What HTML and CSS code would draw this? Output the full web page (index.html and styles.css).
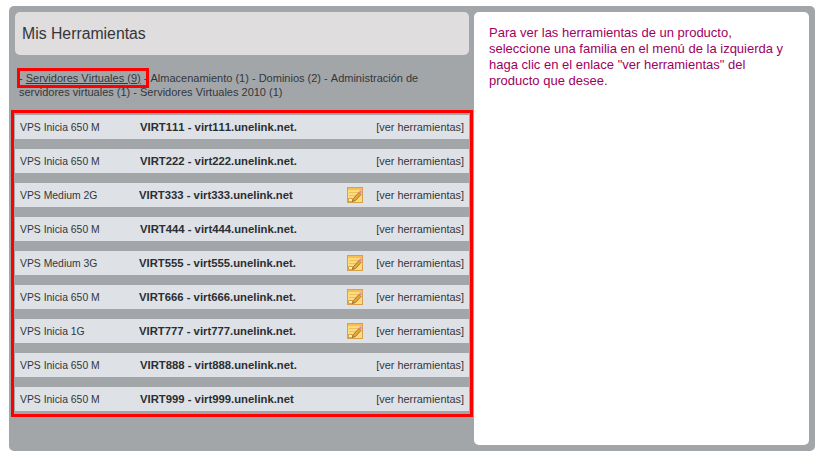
FILE: index.html
```html
<!DOCTYPE html>
<html lang="es">
<head>
<meta charset="utf-8">
<title>Mis Herramientas</title>
<link rel="stylesheet" href="styles.css">
</head>
<body>
<svg width="0" height="0" class="defs">
  <symbol id="note" viewBox="0 0 16 16">
    <rect x="0.5" y="0.5" width="15" height="15" fill="#fcdc7c" stroke="#d8a048"/>
    <rect x="1" y="1" width="14" height="2" fill="#f8c04a"/>
    <path d="M2 5.5h12M2 8.5h7" stroke="#f0c060" fill="none"/>
    <path d="M1.5 11.5h4v3h-4z" fill="#fff0b8" stroke="#d8a048"/>
    <path d="M5.5 14.5l1-3 5.5-6 2 2-5.500 6z" fill="#eda63c" stroke="#6f5a3a" stroke-width=".7"/>
    <path d="M12 4.500l1.500-1.500 2 2-1.500 1.500z" fill="#e88cc4"/>
  </symbol>
</svg>
<main class="panel">
  <section class="left">
    <h1 class="title">Mis Herramientas</h1>
    <p class="families">
      <span class="fam-sel">- <a class="fam-link" href="#">Servidores Virtuales (9)</a> -</span>
      Almacenamiento (1) - Dominios (2) - Administración de servidores virtuales (1) - Servidores Virtuales 2010 (1)
    </p>
    <div class="list">
      <div class="row"><span class="plan">VPS Inicia 650 M</span><b class="name">VIRT111 - virt111.unelink.net.</b><span class="tools">[ver herramientas]</span></div>
      <div class="row"><span class="plan">VPS Inicia 650 M</span><b class="name">VIRT222 - virt222.unelink.net.</b><span class="tools">[ver herramientas]</span></div>
      <div class="row noted"><span class="plan">VPS Medium 2G</span><b class="name">VIRT333 - virt333.unelink.net</b><svg class="icon"><use href="#note"/></svg><span class="tools">[ver herramientas]</span></div>
      <div class="row"><span class="plan">VPS Inicia 650 M</span><b class="name">VIRT444 - virt444.unelink.net.</b><span class="tools">[ver herramientas]</span></div>
      <div class="row noted"><span class="plan">VPS Medium 3G</span><b class="name">VIRT555 - virt555.unelink.net.</b><svg class="icon"><use href="#note"/></svg><span class="tools">[ver herramientas]</span></div>
      <div class="row noted"><span class="plan">VPS Inicia 650 M</span><b class="name">VIRT666 - virt666.unelink.net.</b><svg class="icon"><use href="#note"/></svg><span class="tools">[ver herramientas]</span></div>
      <div class="row noted"><span class="plan">VPS Inicia 1G</span><b class="name">VIRT777 - virt777.unelink.net.</b><svg class="icon"><use href="#note"/></svg><span class="tools">[ver herramientas]</span></div>
      <div class="row"><span class="plan">VPS Inicia 650 M</span><b class="name">VIRT888 - virt888.unelink.net.</b><span class="tools">[ver herramientas]</span></div>
      <div class="row"><span class="plan">VPS Inicia 650 M</span><b class="name">VIRT999 - virt999.unelink.net</b><span class="tools">[ver herramientas]</span></div>
    </div>
  </section>
  <aside class="help">
    <p>Para ver las herramientas de un producto, seleccione una familia en el menú de la izquierda y haga clic en el enlace "ver herramientas" del producto que desee.</p>
  </aside>
</main>
</body>
</html>
```
FILE: styles.css
```css
* { box-sizing: border-box; }
html, body { margin: 0; padding: 0; background: #fff; }
body {
  width: 822px;
  height: 457px;
  padding: 6px 7px 6px 9px;
  font-family: "Liberation Sans", Arial, sans-serif;
  font-kerning: none;
  overflow: hidden;
}
.defs { position: absolute; }
.panel {
  display: flex;
  height: 445px;
  padding: 6px 6px 6px 2px;
  background: #a3a6a9;
  border-radius: 5px;
}
.left { width: 463px; }
.title {
  margin: 0 0 0 4px;
  width: 454px;
  height: 43px;
  padding-left: 7px;
  font-size: 15.8px;
  line-height: 43px;
  font-weight: normal;
  color: #33363a;
  background: #dfdddd;
  border-radius: 5px;
}
.families {
  margin: 16px 0 0 8px;
  width: 405px;
  height: 39px;
  font-size: 11px;
  line-height: 14px;
  color: #33363a;
}
.fam-sel { outline: 3px solid #f00; outline-offset: -1px; padding: 2px 0; }
.fam-link { color: #33363a; text-decoration: underline; }
.list {
  display: flex;
  flex-direction: column;
  gap: 10px;
  width: 462px;
  height: 307px;
  padding: 2px 1px 0 1px;
  border: 3px solid #f00;
}
.row {
  display: flex;
  align-items: center;
  height: 24px;
  padding: 0 5px;
  background: #dee2e6;
  font-size: 11.3px;
  color: #33363a;
}
.plan { width: 120px; font-size: 10.4px; }
.name { color: #2b2e32; }
.noted .name { margin-left: -1px; }
.icon { width: 16px; height: 16px; margin-left: auto; margin-right: 13px; }
.tools { margin-left: auto; font-size: 10.9px; }
.noted .icon + .tools { margin-left: 0; }
.help {
  width: 335px;
  height: 433px;
  padding: 13px 15px;
  background: #fff;
  border-radius: 5px;
}
.help p {
  margin: 0;
  font-size: 13px;
  line-height: 16px;
  color: #a0005f;
}
```
